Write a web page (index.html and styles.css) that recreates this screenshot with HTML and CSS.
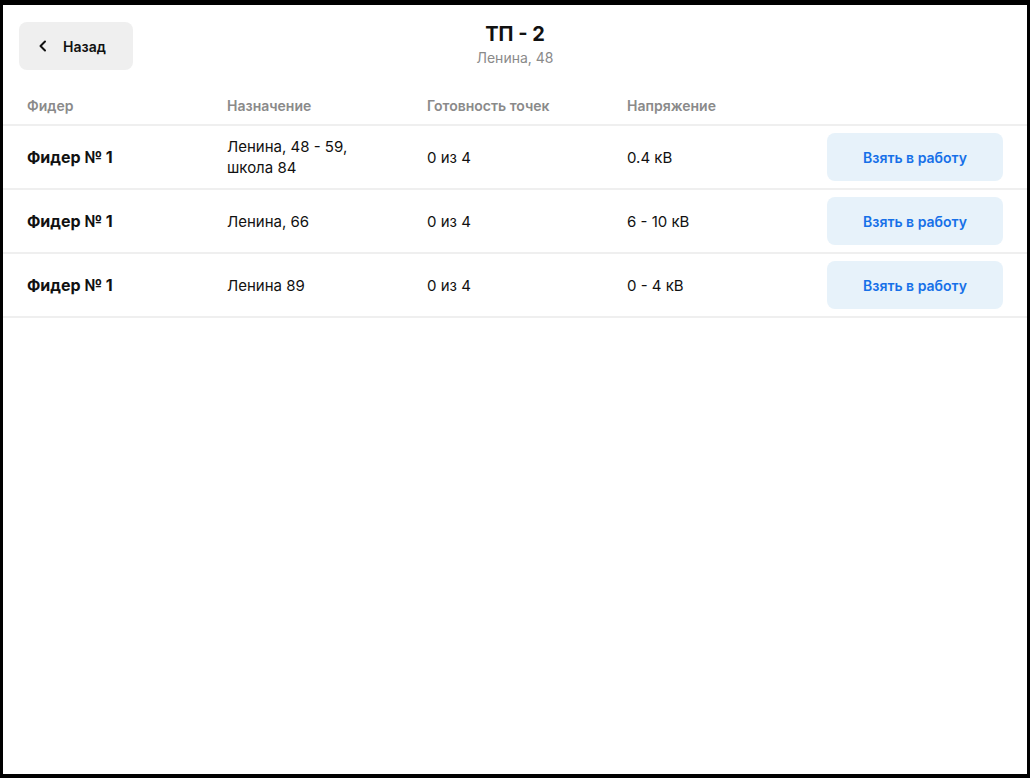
FILE: index.html
```html
<!DOCTYPE html>
<html lang="ru">
<head>
<meta charset="utf-8">
<link rel="stylesheet" href="styles.css">
</head>
<body>
<div class="screen">
  <header class="topbar">
    <button class="back">
      <svg width="16" height="16" viewBox="0 0 16 16"><path d="M10 3.5 L5.5 8 L10 12.5" fill="none" stroke="#111" stroke-width="2" stroke-linecap="round" stroke-linejoin="round"/></svg>
      <span>Назад</span>
    </button>
    <div class="title">
      <div class="name">ТП - 2</div>
      <div class="addr">Ленина, 48</div>
    </div>
  </header>
  <div class="table">
    <div class="row head">
      <div class="cell">Фидер</div>
      <div class="cell">Назначение</div>
      <div class="cell">Готовность точек</div>
      <div class="cell">Напряжение</div>
      <div class="cell act"></div>
    </div>
    <div class="row">
      <div class="cell feeder">Фидер № 1</div>
      <div class="cell">Ленина, 48 - 59,<br>школа 84</div>
      <div class="cell">0 из 4</div>
      <div class="cell">0.4 кВ</div>
      <div class="cell act"><button class="take">Взять в работу</button></div>
    </div>
    <div class="row">
      <div class="cell feeder">Фидер № 1</div>
      <div class="cell">Ленина, 66</div>
      <div class="cell">0 из 4</div>
      <div class="cell">6 - 10 кВ</div>
      <div class="cell act"><button class="take">Взять в работу</button></div>
    </div>
    <div class="row">
      <div class="cell feeder">Фидер № 1</div>
      <div class="cell">Ленина 89</div>
      <div class="cell">0 из 4</div>
      <div class="cell">0 - 4 кВ</div>
      <div class="cell act"><button class="take">Взять в работу</button></div>
    </div>
  </div>
</div>
</body>
</html>
```

FILE: styles.css
```css
* { box-sizing: border-box; }
html, body { margin: 0; padding: 0; }
body {
  background: #000;
  font-family: Inter, "Noto Sans", sans-serif;
  color: #111;
}
.screen {
  margin: 5px 3px 4px 3px;
  height: 769px;
  background: #fff;
}
.topbar {
  position: relative;
  padding: 17px 16px 0 16px;
  height: 65px;
}
.back {
  display: flex;
  align-items: center;
  gap: 12px;
  width: 114px;
  height: 48px;
  padding: 0 0 0 16px;
  border: none;
  border-radius: 8px;
  background: #efefef;
  font-family: inherit;
  font-size: 14px;
  font-weight: 600;
  color: #111;
}
.title {
  position: absolute;
  left: 0;
  right: 0;
  top: 17px;
  text-align: center;
  pointer-events: none;
}
.name {
  font-size: 20px;
  font-weight: 700;
  line-height: 24px;
}
.addr {
  margin-top: 3px;
  font-size: 14px;
  line-height: 18px;
  color: #8a8a8a;
}
.row {
  display: flex;
  align-items: center;
  padding: 0 24px;
  min-height: 64px;
  border-bottom: 2px solid #efefef;
}
.row.head {
  min-height: 0;
  padding-top: 25px;
  padding-bottom: 8px;
  color: #8a8a8a;
  line-height: 22px;
}
.cell {
  width: 200px;
  flex: none;
  font-size: 15px;
  line-height: 21px;
}
.row.head .cell { font-size: 14px; font-weight: 600; }
.cell.feeder { font-weight: 700; font-size: 16px; }
.cell.act {
  flex: 1;
  width: auto;
  display: flex;
  justify-content: flex-end;
}
.take {
  width: 176px;
  height: 48px;
  margin: 7px 0;
  border: none;
  border-radius: 8px;
  background: #e7f2fa;
  color: #1670e8;
  font-family: inherit;
  font-size: 14px;
  font-weight: 600;
}
```
